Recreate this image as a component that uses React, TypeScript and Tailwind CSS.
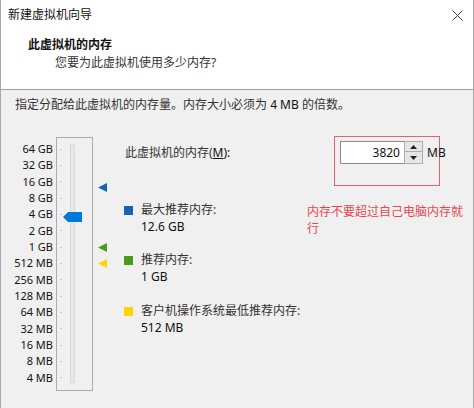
import React from "react";

// Memory page of the new-VM wizard: slider on the left, spin box and
// recommended-memory legend on the right.

const SIZES = [
    "64 GB", "32 GB", "16 GB", "8 GB", "4 GB", "2 GB", "1 GB",
    "512 MB", "256 MB", "128 MB", "64 MB", "32 MB", "16 MB", "8 MB", "4 MB",
];

const FONT = { fontFamily: '"Noto Sans", "Noto Sans CJK SC", sans-serif' };

function Marker({ color, top }: { color: string; top: number }) {
    return (
        <svg
            className="absolute left-[5px]"
            style={{ top }}
            width="9"
            height="9"
            viewBox="0 0 9 9"
        >
            <polygon points="0,4.5 9,0 9,9" fill={color} />
        </svg>
    );
}

function LegendItem({
    color,
    label,
    value,
    className,
}: {
    color: string;
    label: string;
    value: string;
    className?: string;
}) {
    return (
        <div className={`flex items-start ${className ?? ""}`}>
            <span className={`mt-[5px] w-[9px] h-[9px] shrink-0 ${color}`} />
            <div className="ml-[8px] flex flex-col">
                <span className="h-[17px] leading-[17px] text-[#333]">{label}</span>
                <span className="h-[17px] leading-[17px] text-[#111]">{value}</span>
            </div>
        </div>
    );
}

export default function App() {
    return (
        <div
            className="w-[474px] h-[408px] bg-[#f0f0f0] border-x border-[#a8a8a8] text-[12px] text-[#222] flex flex-col overflow-hidden"
            style={FONT}
        >
            {/* wizard header */}
            <div className="h-[90px] shrink-0 bg-white border-b border-[#a0a0a0] flex flex-col">
                <div className="h-[30px] flex items-center justify-between pl-[7px] pr-[10px]">
                    <span className="text-[#111]">新建虚拟机向导</span>
                    <svg width="11" height="11" viewBox="0 0 11 11">
                        <path d="M0.5 0.5 L10.5 10.5 M10.5 0.5 L0.5 10.5" stroke="#444" strokeWidth="1" />
                    </svg>
                </div>
                <div className="mt-[7px] h-[16px] leading-[16px] pl-[27px] font-bold text-[#111]">
                    此虚拟机的内存
                </div>
                <div className="mt-[2px] h-[16px] leading-[16px] pl-[54px] text-[#333]">
                    您要为此虚拟机使用多少内存?
                </div>
            </div>

            <div className="pt-[6px] h-[23px] leading-[17px] pl-[14px] text-[#333]">
                指定分配给此虚拟机的内存量。内存大小必须为 <span className="text-[#111]">4 MB</span> 的倍数。
            </div>

            <div className="mt-[24px] flex items-start">
                {/* scale labels */}
                <div className="w-[52px] pt-[4px] flex flex-col items-end">
                    {SIZES.map((s) => (
                        <div key={s} className="h-[16.33px] leading-[16.33px] text-[11px] text-[#111]">
                            {s}
                        </div>
                    ))}
                </div>

                {/* slider */}
                <div className="ml-[3px] w-[37px] h-[254px] border border-[#adadad] relative flex items-start">
                    <div className="ml-[3px] pt-[3px] w-[3px] flex flex-col">
                        {SIZES.map((s) => (
                            <div key={s} className="h-[16.33px] flex items-center">
                                <span className="w-[2px] h-[1px] bg-[#c8c8c8]" />
                            </div>
                        ))}
                    </div>
                    <div className="ml-[7px] mt-[6px] w-[5px] h-[239px] bg-[#e7e7e7] border border-[#d9d9d9]" />
                    <svg className="absolute left-[6px] top-[74px]" width="19" height="10" viewBox="0 0 19 10">
                        <polygon points="0,5 5,0 19,0 19,10 5,10" fill="#0078d7" />
                    </svg>
                </div>

                {/* recommended-size markers */}
                <div className="w-[31px] h-[254px] relative">
                    <Marker color="#1565b7" top={46} />
                    <Marker color="#4a9a1e" top={106} />
                    <Marker color="#ffd400" top={122} />
                </div>

                <div className="flex-1 flex flex-col">
                    <div className="flex items-start">
                        <div className="w-[210px] pl-[1px] mt-[8px] h-[16px] leading-[16px] text-[#333]">
                            此虚拟机的内存(<span className="underline text-[#111]">M</span>
                            <span className="text-[#111]">):</span>
                        </div>
                        <div className="-mt-[1px] w-[106px] h-[50px] border border-[#e8626a] flex items-start pl-[5px] pt-[4px]">
                            <div className="w-[64px] h-[23px] shrink-0 bg-white border border-[#8a8a8a] border-r-0 flex items-center justify-end pr-[4px] text-[#111]">
                                3820
                            </div>
                            <div className="w-[19px] h-[23px] shrink-0 flex flex-col border border-[#adadad] bg-[#e6e6e6]">
                                <div className="h-[10px] flex items-center justify-center border-b border-[#adadad]">
                                    <svg width="7" height="4" viewBox="0 0 7 4">
                                        <polygon points="3.5,0 7,4 0,4" fill="#222" />
                                    </svg>
                                </div>
                                <div className="flex-1 flex items-center justify-center">
                                    <svg width="7" height="4" viewBox="0 0 7 4">
                                        <polygon points="0,0 7,0 3.5,4" fill="#222" />
                                    </svg>
                                </div>
                            </div>
                            <span className="ml-[4px] mt-[4px] h-[16px] shrink-0 leading-[16px] text-[#111]">MB</span>
                        </div>
                    </div>

                    <div className="mt-[15px] flex items-start">
                        <div className="w-[183px] flex flex-col">
                            <LegendItem color="bg-[#1565b7]" label="最大推荐内存:" value="12.6 GB" />
                            <LegendItem className="mt-[16px]" color="bg-[#4a9a1e]" label="推荐内存:" value="1 GB" />
                            <LegendItem className="mt-[17px]" color="bg-[#ffd400]" label="客户机操作系统最低推荐内存:" value="512 MB" />
                        </div>
                        <div
                            className="w-[160px] mt-[1px] leading-[17px] text-[#e8474f]"
                            style={{ fontFamily: '"Noto Sans CJK SC", sans-serif' }}
                        >
                            内存不要超过自己电脑内存就行
                        </div>
                    </div>
                </div>
            </div>
        </div>
    );
}
